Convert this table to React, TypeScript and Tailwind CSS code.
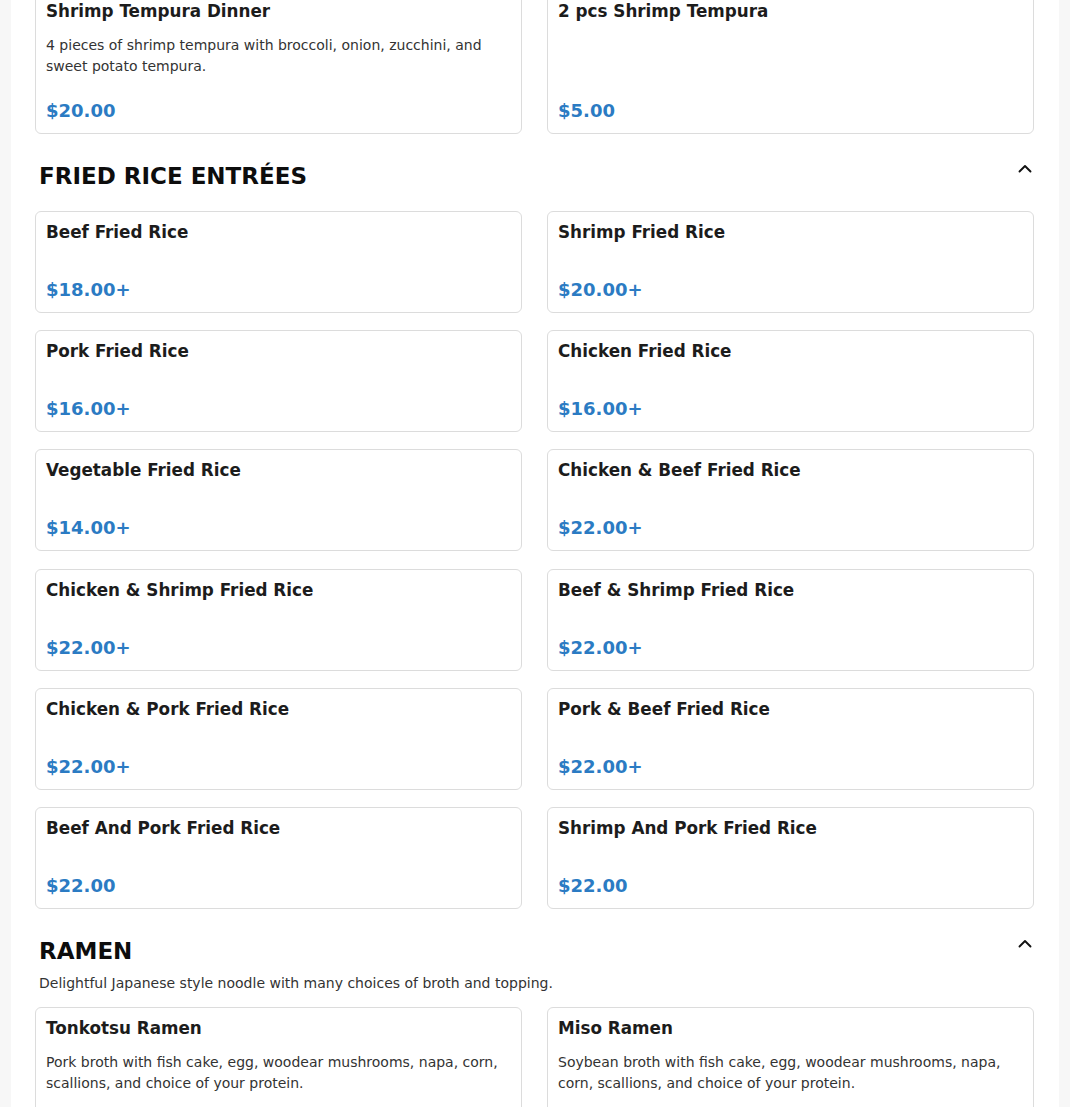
import React from "react";

type Item = { name: string; price: string; desc?: string };

const friedRice: Item[] = [
  { name: "Beef Fried Rice", price: "$18.00+" },
  { name: "Shrimp Fried Rice", price: "$20.00+" },
  { name: "Pork Fried Rice", price: "$16.00+" },
  { name: "Chicken Fried Rice", price: "$16.00+" },
  { name: "Vegetable Fried Rice", price: "$14.00+" },
  { name: "Chicken & Beef Fried Rice", price: "$22.00+" },
  { name: "Chicken & Shrimp Fried Rice", price: "$22.00+" },
  { name: "Beef & Shrimp Fried Rice", price: "$22.00+" },
  { name: "Chicken & Pork Fried Rice", price: "$22.00+" },
  { name: "Pork & Beef Fried Rice", price: "$22.00+" },
  { name: "Beef And Pork Fried Rice", price: "$22.00" },
  { name: "Shrimp And Pork Fried Rice", price: "$22.00" },
];

const tempura: Item[] = [
  {
    name: "Shrimp Tempura Dinner",
    price: "$20.00",
    desc: "4 pieces of shrimp tempura with broccoli, onion, zucchini, and sweet potato tempura.",
  },
  { name: "2 pcs Shrimp Tempura", price: "$5.00" },
];

const ramen: Item[] = [
  {
    name: "Tonkotsu Ramen",
    price: "$18.00+",
    desc: "Pork broth with fish cake, egg, woodear mushrooms, napa, corn, scallions, and choice of your protein.",
  },
  {
    name: "Miso Ramen",
    price: "$18.00+",
    desc: "Soybean broth with fish cake, egg, woodear mushrooms, napa, corn, scallions, and choice of your protein.",
  },
];

function Card({ item }: { item: Item }) {
  return (
    <div className="flex flex-col rounded-[6px] border border-[#dcdcdc] bg-white px-[10px] pt-[8px] pb-[9px]">
      <div className="text-[16.8px] font-bold leading-[24px] text-[#1c1c1c]">{item.name}</div>
      <div className="mt-[12px] min-h-0 flex-1 text-[14px] leading-[21px] text-[#333333]">
        {item.desc}
      </div>
      <div className="mt-[20px] text-[18px] font-bold leading-[27px] text-[#2b7bc3]">{item.price}</div>
    </div>
  );
}

function Chevron() {
  return (
    <svg width="16" height="16" viewBox="0 0 16 16" fill="none" className="mt-[-14px]">
      <path d="M2.5 10.5 L8 5 L13.5 10.5" stroke="#111" strokeWidth="1.9" strokeLinecap="round" strokeLinejoin="round" />
    </svg>
  );
}

function Header({ title, desc }: { title: string; desc?: string }) {
  return (
    <div className="mt-[26px] pl-[4px]">
      <div className="flex h-[32px] items-center justify-between pr-[1px]">
        <h2 className="text-[23px] font-bold leading-[32px] text-[#0d0d0d]">{title}</h2>
        <Chevron />
      </div>
      {desc ? (
        <p className="mt-[6px] mb-[13px] text-[14px] leading-[21px] text-[#333333]">{desc}</p>
      ) : (
        <div className="h-[19px]" />
      )}
    </div>
  );
}

function Grid({ items }: { items: Item[] }) {
  return (
    <div className="grid grid-cols-2 gap-x-[25px] gap-y-[17.2px]">
      {items.map((it) => (
        <Card key={it.name} item={it} />
      ))}
    </div>
  );
}

export default function App() {
  return (
    <div
      className="h-[1107px] overflow-hidden bg-[#f7f7f7]"
      style={{ fontFamily: '"DejaVu Sans", Verdana, sans-serif' }}
    >
      <div className="mx-[11px] -mt-[10px] bg-white px-[24px] pb-[40px] pr-[25px]">
        <Grid items={tempura} />
        <Header title="FRIED RICE ENTRÉES" />
        <Grid items={friedRice} />
        <Header title="RAMEN" desc="Delightful Japanese style noodle with many choices of broth and topping." />
        <Grid items={ramen} />
      </div>
    </div>
  );
}
